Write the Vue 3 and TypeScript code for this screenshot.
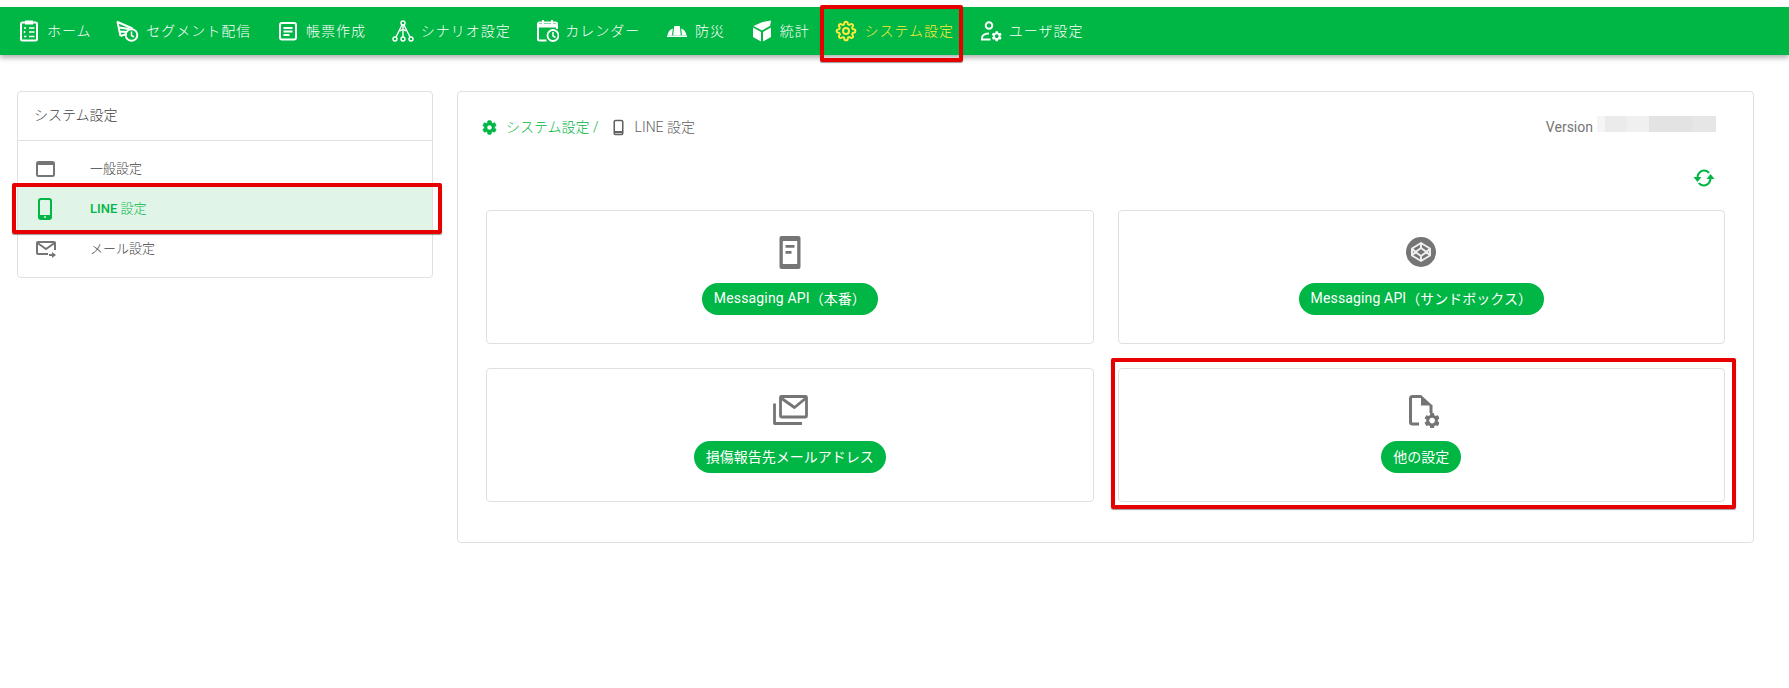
<script setup lang="ts">
const navItems = [
  { key: 'home', label: 'ホーム' },
  { key: 'segment', label: 'セグメント配信' },
  { key: 'form', label: '帳票作成' },
  { key: 'scenario', label: 'シナリオ設定' },
  { key: 'calendar', label: 'カレンダー' },
  { key: 'disaster', label: '防災' },
  { key: 'stats', label: '統計' },
  { key: 'system', label: 'システム設定' },
  { key: 'user', label: 'ユーザ設定' },
]
const tiles = [
  { key: 'msg', latin: 'Messaging API', label: '（本番）' },
  { key: 'sandbox', latin: 'Messaging API', label: '（サンドボックス）' },
  { key: 'mail', latin: '', label: '損傷報告先メールアドレス' },
  { key: 'other', latin: '', label: '他の設定' },
]
const solidGear =
  'M19.14 12.94c.04-.3.06-.61.06-.94 0-.32-.02-.64-.07-.94l2.03-1.58c.18-.14.23-.41.12-.61l-1.92-3.32c-.12-.22-.37-.29-.59-.22l-2.39.96c-.5-.38-1.03-.7-1.62-.94l-.36-2.54c-.04-.24-.24-.41-.48-.41h-3.84c-.24 0-.43.17-.47.41l-.36 2.54c-.59.24-1.13.57-1.62.94l-2.39-.96c-.22-.08-.47 0-.59.22L2.74 8.87c-.12.21-.08.47.12.61l2.03 1.58c-.05.3-.09.63-.09.94s.02.64.07.94l-2.03 1.58c-.18.14-.23.41-.12.61l1.92 3.32c.12.22.37.29.59.22l2.39-.96c.5.38 1.03.7 1.62.94l.36 2.54c.05.24.24.41.48.41h3.84c.24 0 .44-.17.47-.41l.36-2.54c.59-.24 1.13-.56 1.62-.94l2.39.96c.22.08.47 0 .59-.22l1.92-3.32c.12-.22.07-.47-.12-.61l-2.01-1.58zM12 15.6c-1.98 0-3.6-1.62-3.6-3.6s1.62-3.6 3.6-3.6 3.6 1.62 3.6 3.6-1.62 3.6-3.6 3.6z'
const outlineGear =
  'M19.4 15a1.65 1.65 0 0 0 .33 1.82l.06.06a2 2 0 0 1 0 2.83 2 2 0 0 1-2.83 0l-.06-.06a1.65 1.65 0 0 0-1.82-.33 1.65 1.65 0 0 0-1 1.51V21a2 2 0 0 1-2 2 2 2 0 0 1-2-2v-.09A1.65 1.65 0 0 0 9 19.4a1.65 1.65 0 0 0-1.82.33l-.06.06a2 2 0 0 1-2.83 0 2 2 0 0 1 0-2.83l.06-.06a1.65 1.65 0 0 0 .33-1.82 1.65 1.65 0 0 0-1.51-1H3a2 2 0 0 1-2-2 2 2 0 0 1 2-2h.09A1.65 1.65 0 0 0 4.6 9a1.65 1.65 0 0 0-.33-1.82l-.06-.06a2 2 0 0 1 0-2.83 2 2 0 0 1 2.83 0l.06.06a1.65 1.65 0 0 0 1.82.33H9a1.65 1.65 0 0 0 1-1.51V3a2 2 0 0 1 2-2 2 2 0 0 1 2 2v.09a1.65 1.65 0 0 0 1 1.51 1.65 1.65 0 0 0 1.82-.33l.06-.06a2 2 0 0 1 2.83 0 2 2 0 0 1 0 2.83l-.06.06a1.65 1.65 0 0 0-.33 1.82V9a1.65 1.65 0 0 0 1.51 1H21a2 2 0 0 1 2 2 2 2 0 0 1-2 2h-.09a1.65 1.65 0 0 0-1.51 1z'
</script>

<template>
  <div class="page">
    <nav class="nav">
      <div v-for="item in navItems" :key="item.key" class="nav-item" :class="{ active: item.key === 'system' }">
        <svg class="nav-icon" viewBox="0 0 24 24" fill="none" stroke="currentColor" stroke-width="2">
          <template v-if="item.key === 'home'">
            <rect x="4" y="3.500" width="16" height="18" rx="1.500" />
            <rect x="8" y="1.500" width="8" height="4" fill="currentColor" stroke="none" />
            <path d="M7 9h2M7.500 12v2M7 17.500h2.500M12 9h5.500M12 13h5.500M12 17.500h5.500" stroke-width="1.500" />
          </template>
          <template v-else-if="item.key === 'segment'">
            <path d="M4.500 17L1.500 3l15 6.500M3 8.500l10 1.500M4 12.500l6.500.5M4.500 17l6-2" stroke-width="2" stroke-linejoin="round" />
            <circle cx="15.500" cy="16" r="5.800" fill="#00b644" />
            <path d="M15.500 12.500v4l2.500 1.500" stroke-width="1.500" />
          </template>
          <template v-else-if="item.key === 'form'">
            <rect x="4" y="4" width="16" height="16.500" rx="2" stroke-width="2" />
            <path d="M7.500 9h9M7.500 12.500h9M7.500 16h6" stroke-width="1.800" />
          </template>
          <template v-else-if="item.key === 'scenario'">
            <circle cx="12" cy="4" r="2" stroke-width="1.400" />
            <circle cx="4" cy="20" r="2" stroke-width="1.400" />
            <circle cx="12" cy="20" r="2" stroke-width="1.400" />
            <circle cx="20" cy="20" r="2" stroke-width="1.400" />
            <path d="M11 6L5 18M13 6l6 12M12 6v4M9 12l3-2 3 2M12 10v8" stroke-width="1.400" />
          </template>
          <template v-else-if="item.key === 'calendar'">
            <g transform="translate(1.500 0)">
              <path d="M10 21.500H3a1.500 1.500 0 0 1-1.500-1.500V5A1.500 1.500 0 0 1 3 3.500h16A1.500 1.500 0 0 1 20.500 5v5" />
              <path d="M6.500 1v4M15.500 1v4" />
              <rect x="1.500" y="5" width="19" height="3.500" fill="currentColor" stroke="none" />
              <circle cx="16.500" cy="16.500" r="5.500" stroke-width="1.800" />
              <path d="M16.500 13v4l2.500 1.500" stroke-width="1.500" />
            </g>
          </template>
          <template v-else-if="item.key === 'disaster'">
            <g fill="currentColor" stroke="none">
              <path d="M9.200 7h5.600l1 9.500H8.200z" />
              <path d="M7.800 9.500C4.800 10.500 3 13 2.500 16.500H7z" />
              <path d="M16.200 9.500c3 1 4.800 3.500 5.300 7H17z" />
              <path d="M2 16.500h20V18H2z" />
            </g>
          </template>
          <template v-else-if="item.key === 'stats'">
            <g fill="currentColor" stroke="none">
              <path d="M12 11.500L3.500 7 12.500 3 21 1.500l-.8 5.300z" />
              <path d="M3 8.500l8 4.500v9.500l-8-4.500zM13 13l8-4.500V18l-8 4.500z" />
            </g>
          </template>
          <template v-else-if="item.key === 'system'">
            <g transform="translate(1.800 1.800) scale(0.85)" stroke-width="2.300">
              <path :d="outlineGear" />
              <circle cx="12" cy="12" r="3.500" />
            </g>
          </template>
          <template v-else>
            <circle cx="10" cy="6.500" r="3.300" />
            <path d="M11.500 20.500H3v-1.500c0-3 3.500-4.500 7-4.500" />
            <g transform="translate(11.500 11) scale(0.520)">
              <path :d="solidGear" fill="currentColor" stroke="none" />
            </g>
          </template>
        </svg>
        <span class="nav-label">{{ item.label }}</span>
      </div>
    </nav>

    <main class="content">
      <aside class="side card">
        <div class="side-head">システム設定</div>
        <ul class="side-list">
          <li class="side-row">
            <svg class="side-icon" viewBox="0 0 24 24" fill="none" stroke="currentColor" stroke-width="2">
              <rect x="3" y="6" width="17" height="14" rx="1.500" />
              <path d="M3 7.500h17" stroke-width="3" />
            </svg>
            <span class="side-text">一般設定</span>
          </li>
          <li class="side-row selected">
            <svg class="side-icon" viewBox="0 0 24 24" fill="none" stroke="currentColor" stroke-width="2">
              <rect x="5" y="3" width="12" height="20" rx="2" />
              <rect x="5" y="19" width="12" height="4" fill="currentColor" stroke="none" />
              <circle cx="11" cy="21" r="1" fill="#e0f4e8" stroke="none" />
            </svg>
            <span class="side-text"><b class="latin">LINE</b> 設定</span>
          </li>
          <li class="side-row">
            <svg class="side-icon" viewBox="0 0 24 24" fill="none" stroke="currentColor" stroke-width="2">
              <path d="M14 18H4a1 1 0 0 1-1-1V7a1 1 0 0 1 1-1h16a1 1 0 0 1 1 1v7" />
              <path d="M3.500 7l8.500 6 8.500-6" />
              <path d="M15 19h4" />
              <path d="M18 16l4 3-4 3z" fill="currentColor" stroke="none" />
            </svg>
            <span class="side-text">メール設定</span>
          </li>
        </ul>
      </aside>

      <section class="panel card">
        <header class="crumbs">
          <div class="crumb-path">
            <svg class="crumb-gear" viewBox="0 0 24 24" fill="currentColor">
              <path :d="solidGear" stroke="currentColor" stroke-width="1" />
            </svg>
            <span class="crumb-link">システム設定 /</span>
            <svg class="crumb-phone" viewBox="0 0 24 24" fill="none" stroke="currentColor" stroke-width="2.200">
              <rect x="6" y="2" width="12" height="20" rx="2" />
              <path d="M6 18.500h12" stroke-width="3" />
            </svg>
            <span>LINE 設定</span>
          </div>
          <div class="version">
            <span class="version-text">Version</span>
            <span class="mask">
              <i class="m1"></i><i class="m2"></i><i class="m3"></i><i class="m4"></i><i class="m5"></i>
            </span>
          </div>
        </header>

        <div class="refresh-row">
          <svg class="refresh" viewBox="0 0 22 18" fill="none" stroke="currentColor" stroke-width="2.100">
            <path d="M4.500 8C5 4 8 1.500 11 1.500c2.500 0 4 1 5 2.500" />
            <path d="M17.500 10C17 14 14 16.500 11 16.500c-2.500 0-4-1-5-2.500" />
            <path d="M.5 8h8l-4 5zM13.500 10h8l-4-5z" fill="currentColor" stroke="none" />
          </svg>
        </div>

        <div class="tiles">
          <div v-for="tile in tiles" :key="tile.key" class="tile">
            <svg class="tile-icon" viewBox="0 0 36 36" fill="#757575">
              <template v-if="tile.key === 'msg'">
                <path fill-rule="evenodd" d="M9.500 2h17a2 2 0 0 1 2 2v29a2 2 0 0 1-2 2h-17a2 2 0 0 1-2-2V4a2 2 0 0 1 2-2zm1.300 5v23h14.400V7zm2.700 4h9v2.700h-9zm0 6h6v2.700h-6z" />
              </template>
              <template v-else-if="tile.key === 'sandbox'">
                <circle cx="18" cy="18" r="15" />
                <g fill="none" stroke="#eee" stroke-width="2" stroke-linejoin="round">
                  <path d="M18 9l9 5.500v7L18 27l-9-5.500v-7z" />
                  <path d="M18 14l5.500 4-5.500 4-5.500-4zM18 9v5M18 22v5M9 14.500l3.500 3.500L9 21.500M27 14.500L23.500 18l3.500 3.500" />
                </g>
              </template>
              <template v-else-if="tile.key === 'mail'">
                <g fill="none" stroke="#757575" stroke-width="2.800" stroke-linejoin="round">
                  <rect x="8.500" y="4.500" width="26" height="20.500" rx="1" />
                  <path d="M9 6l13.500 9.500L34 6" />
                  <path d="M2.500 11.500v20h27.500" />
                </g>
              </template>
              <template v-else>
                <path d="M18 4.500H9.500a2 2 0 0 0-2 2V30a2 2 0 0 0 2 2H16" fill="none" stroke="#757575" stroke-width="3" />
                <path d="M28 13v8" fill="none" stroke="#757575" stroke-width="3" />
                <path d="M18 3l11.500 10.500H18z" />
                <g transform="translate(19.500 19) scale(0.800)">
                  <path :d="solidGear" />
                </g>
              </template>
            </svg>
            <span class="pill"><span class="pill-latin">{{ tile.latin }}</span>{{ tile.label }}</span>
          </div>
        </div>
      </section>
    </main>

    <div class="mark mark-nav"></div>
    <div class="mark mark-side"></div>
    <div class="mark mark-tile"></div>
  </div>
</template>

<style>
html, body { margin: 0; background: #fff; }
</style>

<style scoped>
.page {
  position: relative;
  width: 1789px;
  height: 688px;
  overflow: hidden;
  padding-top: 7px;
  box-sizing: border-box;
  background: #fff;
  color: #616161;
  font-family: Roboto, "Noto Sans CJK JP", sans-serif;
  font-size: 13px;
}
.nav {
  display: flex;
  align-items: center;
  gap: 24.7px;
  height: 48px;
  padding-left: 17px;
  background: #00b644;
  box-shadow: 0 3px 5px rgba(0, 0, 0, 0.3);
  color: #fff;
}
.nav-item {
  display: flex;
  align-items: center;
  gap: 6px;
  height: 48px;
}
.nav-item.active { color: #ffeb3b; }
.nav-icon { width: 24px; height: 24px; flex: none; }
.nav-label {
  padding-bottom: 2px;
  font-size: 14px;
  font-weight: 300;
  letter-spacing: 1px;
  white-space: nowrap;
}
.content {
  display: flex;
  align-items: flex-start;
  gap: 24px;
  padding: 36px 35px 0 17px;
}
.card {
  background: #fff;
  border: 1px solid #e0e0e0;
  border-radius: 4px;
  box-sizing: border-box;
}
.side { width: 416px; flex: none; }
.side-head {
  height: 49px;
  padding-left: 16px;
  line-height: 47px;
  font-size: 14px;
  font-weight: 300;
  color: #424242;
  border-bottom: 1px solid #e0e0e0;
  box-sizing: border-box;
}
.side-list { list-style: none; margin: 0; padding: 7px 0 9px; }
.side-row {
  display: flex;
  align-items: center;
  height: 40px;
  padding-left: 16px;
  font-size: 13px;
  font-weight: 300;
  color: #424242;
}
.side-text { padding-bottom: 2px; }
.side-row.selected {
  background: #e0f4e8;
  box-shadow: 0 -1px 0 #e0f4e8, 0 2px 0 #e0f4e8;
  color: #00b644;
}
.latin { font-weight: 500; }
.side-icon { width: 24px; height: 24px; margin-right: 32px; flex: none; color: #757575; }
.selected .side-icon { color: #00b644; }
.panel { flex: 1; height: 452px; padding: 22px 28px 0; }
.crumbs {
  display: flex;
  justify-content: space-between;
  align-items: center;
  height: 24px;
}
.crumb-path { display: flex; align-items: center; font-size: 14px; font-weight: 300; color: #616161; }
.crumb-gear { width: 17px; height: 17px; color: #00b644; margin: 2px 8px 0 -5px; }
.crumb-link { color: #00b644; }
.crumb-phone { width: 17px; height: 17px; margin: 2px 8px 0 11px; color: #616161; }
.version {
  display: flex;
  align-items: center;
  gap: 4px;
  padding-right: 9px;
  font-size: 14px;
  color: #757575;
}
.version-text { margin-top: 2px; }
.mask { display: flex; height: 16px; width: 119px; margin-bottom: 4px; }
.mask i { display: block; height: 100%; }
.m1 { width: 8px; background: #f5f5f5; }
.m2 { width: 22px; background: #ebebeb; }
.m3 { width: 22px; background: #f0f0f0; }
.m4 { width: 44px; background: #e3e3e3; }
.m5 { width: 23px; background: #e6e6e6; }
.refresh-row {
  display: flex;
  justify-content: flex-end;
  height: 18px;
  margin-top: 31px;
  padding-right: 10px;
}
.refresh { width: 22px; height: 18px; color: #00b644; }
.tiles {
  display: grid;
  grid-template-columns: 1fr 1fr;
  grid-auto-rows: 134px;
  gap: 24px;
  margin-top: 23px;
}
.tile {
  display: flex;
  flex-direction: column;
  align-items: center;
  border: 1px solid #e0e0e0;
  border-radius: 4px;
  padding-top: 23px;
  box-sizing: border-box;
}
.tile-icon { width: 36px; height: 36px; flex: none; }
.pill {
  display: flex;
  align-items: center;
  height: 32px;
  margin-top: 13px;
  padding: 0 12px 2px;
  box-sizing: border-box;
  border-radius: 16px;
  background: #00b644;
  color: #fff;
  font-size: 14px;
  font-weight: 400;
  white-space: nowrap;
}
.pill-latin { letter-spacing: 0.15px; }
.mark {
  position: absolute;
  box-sizing: border-box;
  border: 4px solid #e60000;
  border-radius: 2px;
  box-shadow: 0 1px 1px rgba(0, 0, 0, 0.4);
}
.mark-nav { left: 820px; top: 5px; width: 143px; height: 57px; }
.mark-side { left: 12px; top: 183px; width: 430px; height: 51px; }
.mark-tile { left: 1111px; top: 358px; width: 625px; height: 151px; }
</style>
